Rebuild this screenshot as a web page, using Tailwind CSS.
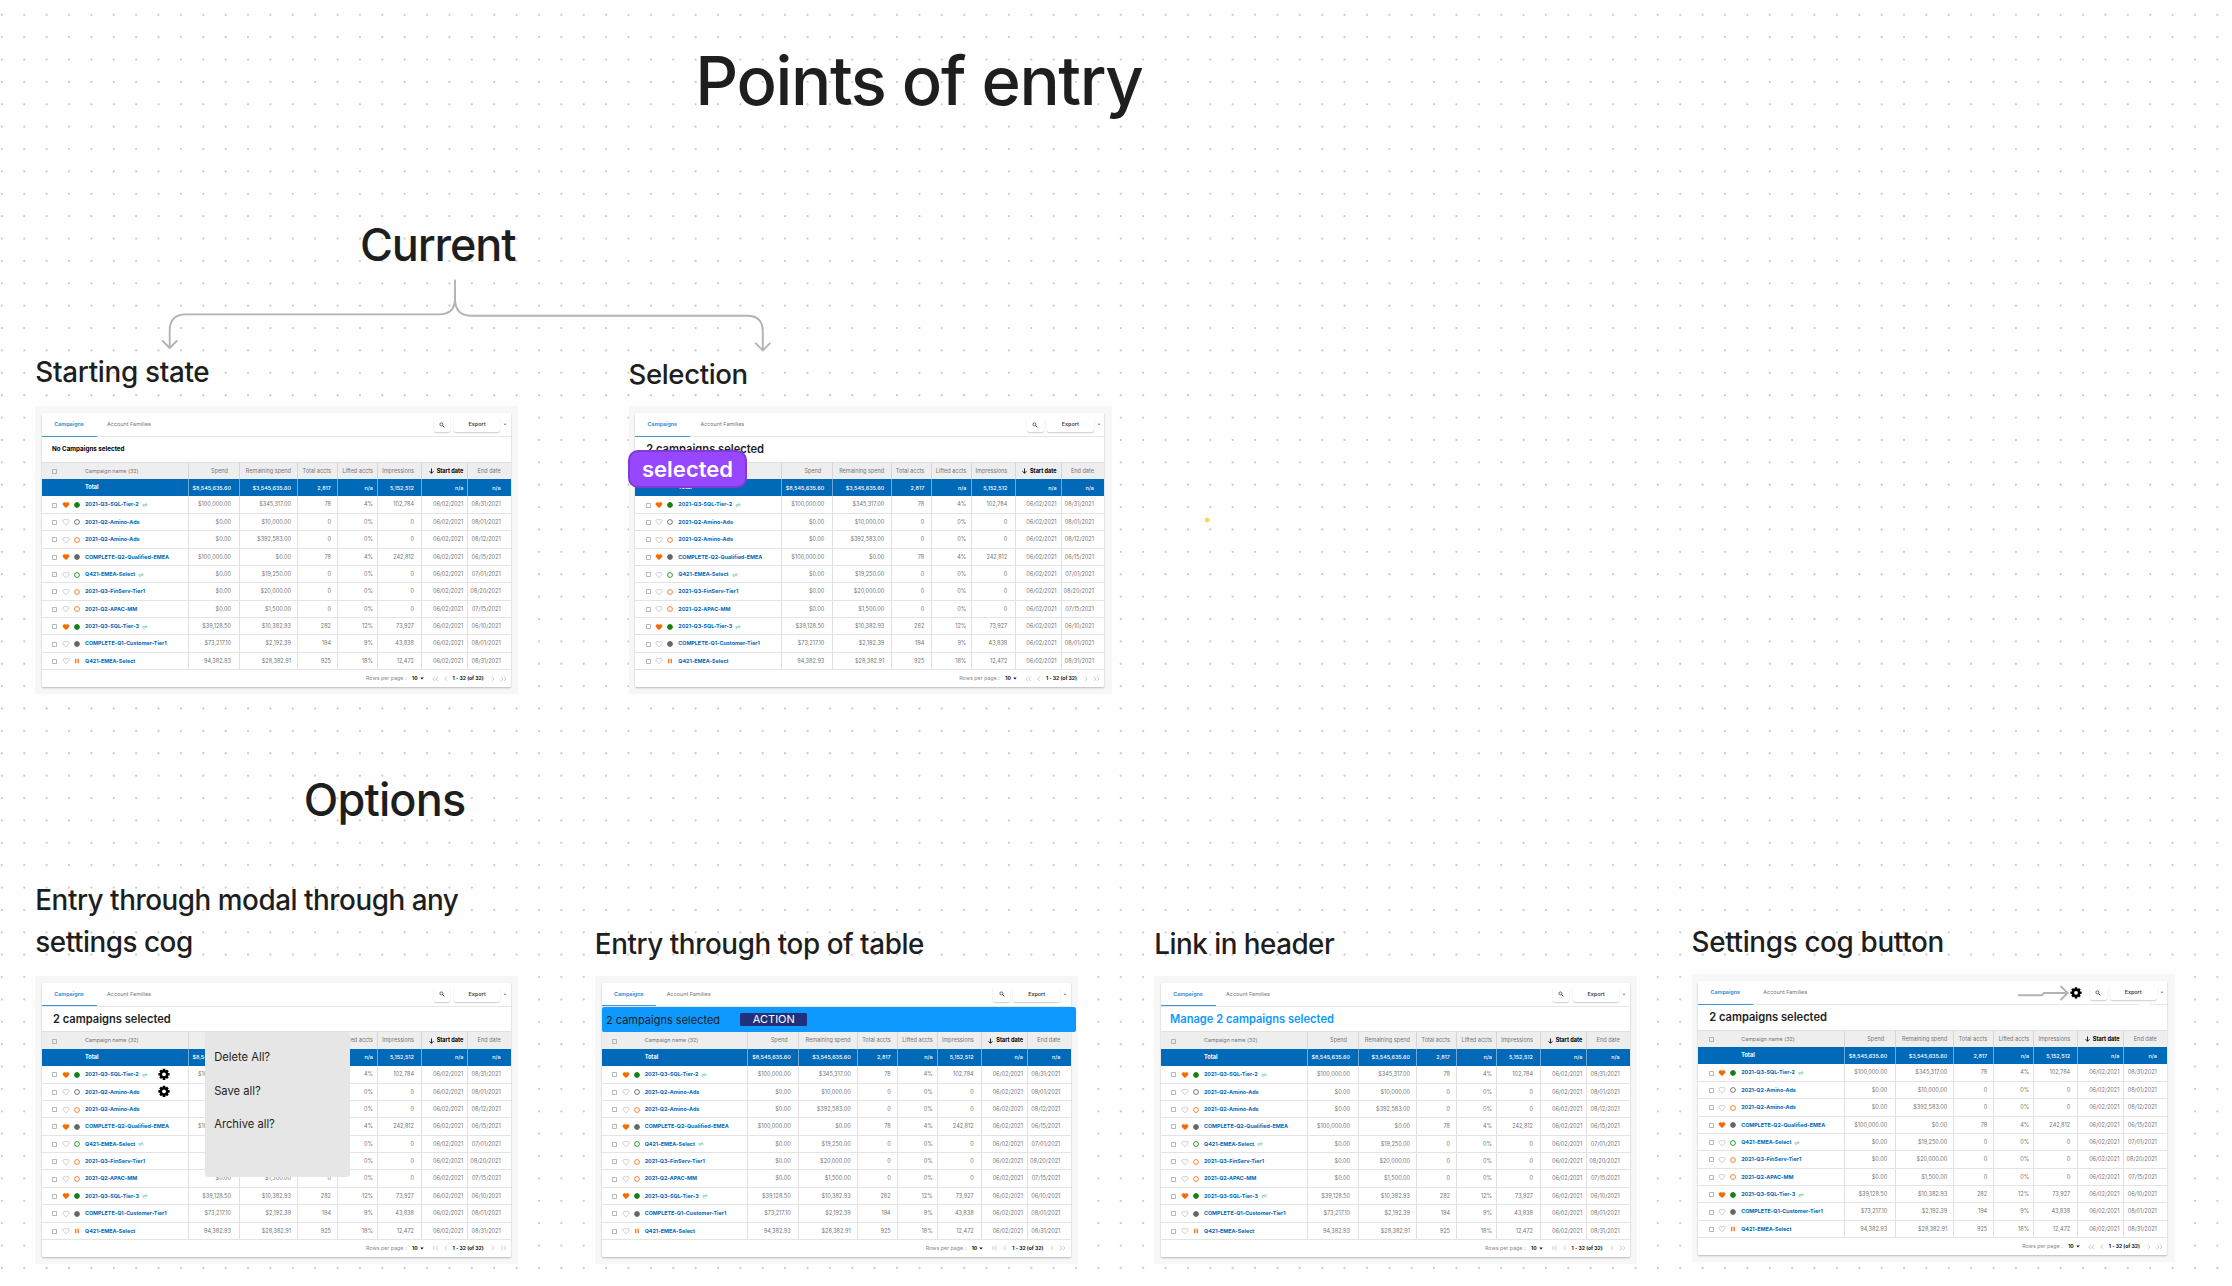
<!DOCTYPE html>
<html lang="en">
<head>
<meta charset="utf-8">
<title>Points of entry</title>
<script src="https://cdn.jsdelivr.net/npm/@tailwindcss/browser@4"></script>
</head>
<body class="bg-white">
<main class="relative w-[2232px] h-[1286px] overflow-hidden bg-[#fefefe] font-['Inter',sans-serif] font-medium text-[#1e1e1e]">
  <svg class="absolute inset-0" width="2232" height="1286" fill="none">
    <g id="dots" stroke="#cdcdcd" stroke-width="2.3" stroke-linecap="round" stroke-dasharray="0 22.378"></g>
    <g stroke="#b3b3b3" stroke-width="1.9" stroke-linecap="round" stroke-linejoin="round">
      <path d="M455 280.500V298.500Q455 314.400 439 314.400H186Q169.700 314.400 169.700 330.500V348M162.700 341L169.700 348L176.700 341"/>
      <path d="M455 298.500Q455 315.700 471 315.700H747Q762.800 315.700 762.800 331.500V350.300M755.800 343.300L762.800 350.300L769.800 343.300"/>
    </g>
    <circle cx="1207" cy="520" r="2.2" fill="#fcd04b"/>
  </svg>

  <h1 class="absolute left-[695.300px] top-[46.500px] text-[67px] tracking-[-1.400px] leading-none whitespace-nowrap">Points of entry</h1>
  <h2 class="absolute left-[360px] top-[222px] text-[45px] tracking-[-1.150px] leading-none whitespace-nowrap">Current</h2>
  <h2 class="absolute left-[303.800px] top-[777px] text-[45px] tracking-[-0.850px] leading-none whitespace-nowrap">Options</h2>
  <h3 class="absolute left-[35.300px] top-[358.500px] text-[27.800px] tracking-[-0.300px] leading-none whitespace-nowrap">Starting state</h3>
  <h3 class="absolute left-[628.500px] top-[361px] text-[27.600px] tracking-[-0.380px] leading-none whitespace-nowrap">Selection</h3>
  <h3 class="absolute left-[35.300px] top-[879.300px] w-[460px] text-[27.800px] tracking-[-0.450px] leading-[42px]">Entry through modal through any<br>settings cog</h3>
  <h3 class="absolute left-[594.800px] top-[930.500px] text-[27.800px] tracking-[-0.420px] leading-none whitespace-nowrap">Entry through top of table</h3>
  <h3 class="absolute left-[1154.300px] top-[930.500px] text-[27.800px] tracking-[-0.500px] leading-none whitespace-nowrap">Link in header</h3>
  <h3 class="absolute left-[1691.500px] top-[928.500px] text-[27.800px] tracking-[-0.320px] leading-none whitespace-nowrap">Settings cog button</h3>

  <section class="absolute left-[35.300px] top-[406.300px]" data-card="No Campaigns selected" data-kind="plain"></section>
  <section class="absolute left-[628.600px] top-[406.300px]" data-card="2 campaigns selected" data-kind="bold"></section>
  <section class="absolute left-[35.300px] top-[976px]" data-card="2 campaigns selected" data-kind="bold"></section>
  <section class="absolute left-[595px] top-[976px]" data-card="" data-kind="bold"></section>
  <section class="absolute left-[1154.300px] top-[976px]" data-card="Manage 2 campaigns selected" data-kind="link"></section>
  <section class="absolute left-[1691.500px] top-[974.300px]" data-card="2 campaigns selected" data-kind="bold"></section>

  <div class="absolute left-[628px] top-[450px] w-[119px] h-[38px] rounded-[10px] border-2 border-[#7f3bd8] bg-[#9747ff] flex items-center justify-center text-[22px] leading-none font-semibold text-white">selected</div>

  <div class="absolute left-[602px] top-[1006.700px] w-[474px] h-[25.300px] rounded-[2px] bg-[#0d99ff] flex items-center pl-[4px] text-[11px] leading-none">
    <span class="w-[134.300px] pt-[3px] font-normal">2 campaigns selected</span>
    <span class="w-[67px] h-[12.700px] rounded-[1.500px] bg-[#20307a] text-white text-[11px] font-normal flex items-center justify-center">ACTION</span>
  </div>

  <div class="absolute left-[205px] top-[1032px] w-[145px] h-[145px] rounded-[3px] bg-[#e6e6e6] pl-[9.200px] pt-[9px] text-[11.200px] font-normal leading-[33.500px]">
    <div>Delete All?</div><div>Save all?</div><div>Archive all?</div>
  </div>

  <svg class="absolute left-0 top-0 pointer-events-none" width="2232" height="1286" fill="none">
    <defs>
      <g id="cog">
        <g stroke="#000" stroke-width="2.600"><path d="M0 -5.600V5.600M-5.600 0H5.600M-3.900 -3.900L3.900 3.900M3.900 -3.900L-3.900 3.900"/></g>
        <circle r="4.300" fill="#000"/><circle r="1.900" fill="#fff"/>
      </g>
    </defs>
    <use href="#cog" x="164" y="1074.300"/>
    <use href="#cog" x="164" y="1091.400"/>
    <use href="#cog" x="2076" y="992.800"/>
    <path d="M2018 995.300H2042L2044 993H2067M2060.500 986L2067.700 993L2060.500 1000" stroke="#b3b3b3" stroke-width="1.900"/>
    <path d="M2139 1004.500H2150" stroke="#fff" stroke-width="2"/>
  </svg>
</main>

<script>
const rows = [
  ['2021-Q3-SQL-Tier-2', 1, 'green', 1, '$100,000.00', '$345,317.00', '78', '4%', '102,784', '08/31/2021'],
  ['2021-Q2-Amino-Ads', 0, 'grayRing', 0, '$0.00', '$10,000.00', '0', '0%', '0', '08/01/2021'],
  ['2021-Q2-Amino-Ads', 0, 'orangeRing', 0, '$0.00', '$392,583.00', '0', '0%', '0', '08/12/2021'],
  ['COMPLETE-Q2-Qualified-EMEA', 1, 'gray', 0, '$100,000.00', '$0.00', '78', '4%', '242,812', '06/15/2021'],
  ['Q421-EMEA-Select', 0, 'greenRing', 1, '$0.00', '$19,250.00', '0', '0%', '0', '07/01/2021'],
  ['2021-Q3-FinServ-Tier1', 0, 'orangeRing', 0, '$0.00', '$20,000.00', '0', '0%', '0', '08/20/2021'],
  ['2021-Q2-APAC-MM', 0, 'orangeRing', 0, '$0.00', '$1,500.00', '0', '0%', '0', '07/15/2021'],
  ['2021-Q3-SQL-Tier-3', 1, 'green', 1, '$39,128.50', '$10,382.93', '282', '12%', '73,927', '06/10/2021'],
  ['COMPLETE-Q1-Customer-Tier1', 0, 'gray', 0, '$73,217.10', '$2,192.39', '194', '9%', '43,838', '08/01/2021'],
  ['Q421-EMEA-Select', 0, 'pause', 0, '94,382.93', '$28,382.91', '925', '18%', '12,472', '08/31/2021'],
];
const dot = (fill, stroke) => `<circle cx="4" cy="4" r="2.4" fill="${fill}" stroke="${stroke}" stroke-width="1"/>`;
const status = {
  green: dot('#158012', '#158012'), gray: dot('#666', '#666'),
  grayRing: dot('none', '#777'), orangeRing: dot('none', '#f58233'), greenRing: dot('none', '#2c9a2c'),
  pause: '<path d="M2.700 1.800V6.200M5.300 1.800V6.200" stroke="#f58233" stroke-width="1.500"/>',
};
const heart = on => `<svg class="block w-[8px] h-[8px]" viewBox="0 0 8 8"><path d="M4 6.800L1.600 4.400C.2 2.900 1.300 1.300 2.600 1.400C3.300 1.400 3.800 1.800 4 2.200C4.200 1.800 4.700 1.400 5.400 1.400C6.700 1.300 7.800 2.900 6.400 4.400Z" fill="${on ? '#f56a00' : 'none'}" stroke="${on ? '#f56a00' : '#aaa'}" stroke-width=".6"/></svg>`;
const sync = '<svg class="block w-[6px] h-[6px] ml-[3px]" viewBox="0 0 6 6" fill="none" stroke="#6cc29a" stroke-width=".6"><path d="M.6 2.500H5.200L3.500 .8M5.400 3.700H.8L2.500 5.400"/></svg>';
const box = '<svg class="block w-[5px] h-[5px] shrink-0" viewBox="0 0 5 5"><rect x=".4" y=".4" width="4.200" height="4.200" rx=".3" fill="none" stroke="#9a9a9a" stroke-width=".8"/></svg>';
const pads = ['pr-[7.700px]', 'pr-[6.300px]', 'pr-[6.300px]', 'pr-[4.300px]', 'pr-[7.300px]', 'pr-[4px]', 'pr-[10.300px]'];
const cells = (values, border) => values.map((v, i) =>
  `<div class="flex items-center justify-end border-l pt-[1.200px] ${border} ${pads[i]}">${v}</div>`).join('');
const rowBase = 'grid grid-cols-[145.700px_51px_58.600px_40px_40px_44px_46px_43.700px] h-[17.380px]';
const heading = {
  plain: 'pl-[10px] text-[6.280px] font-bold text-black pb-[1px]',
  bold: 'pl-[11px] text-[11.130px] font-semibold text-[#1e1e1e]',
  link: 'pl-[9px] text-[11.130px] font-semibold text-[#0d99ff]',
};
document.querySelectorAll('[data-card]').forEach(el => {
  el.innerHTML = `
  <div class="w-[483px] h-[287.700px] bg-[#f7f7f7] px-[6.700px] pt-[6.700px]">
    <div class="w-[469px] h-[274px] bg-white rounded-[1.500px] shadow-[0_1px_2px_rgba(0,0,0,0.25)] flex flex-col font-normal text-[5.550px] leading-none text-[#757575] whitespace-nowrap">
      <div class="h-[24.300px] shrink-0 border-b border-[#e6e6e6] flex items-center">
        <div class="h-[24.300px] w-[54.600px] shrink-0 border-b border-[#4295d4] pl-[12.300px] pt-[1.500px] flex items-center font-semibold text-[5.400px] text-[#2b86cc]">Campaigns</div>
        <div class="pl-[10.500px] pt-[1px] flex-1 text-[5.450px]">Account Families</div>
        <div class="w-[16.700px] h-[14.700px] rounded-[2px] shadow-[0_1px_1.500px_rgba(0,0,0,0.2)] flex items-center justify-center">
          <svg class="w-[6px] h-[6px]" viewBox="0 0 6 6" fill="none" stroke="#444"><circle cx="2.400" cy="2.400" r="1.500" stroke-width=".8"/><path d="M3.500 3.500L5.400 5.400" stroke-width="1"/></svg>
        </div>
        <div class="ml-[3.400px] w-[46.600px] h-[14.700px] rounded-[2px] shadow-[0_1px_1.500px_rgba(0,0,0,0.2)] flex items-center justify-center font-semibold text-[5.400px] text-[#444]">Export</div>
        <svg class="w-[4px] h-[3px] ml-[3.200px] mr-[3.500px]" viewBox="0 0 4 3"><path d="M.5 .8H3.500L2 2.300Z" fill="#777"/></svg>
      </div>
      <div class="h-[24.400px] shrink-0 flex items-center ${heading[el.dataset.kind]}">${el.dataset.card}</div>
      <div class="${rowBase} bg-[#eee] border-t border-[#e0e0e0]">
        <div class="flex items-center pl-[10.500px] pt-[1px]">${box}<span class="ml-[27.500px] text-[5.400px]">Campaign name (32)</span></div>
        ${cells(['<span class="mr-[3px]">Spend</span>', 'Remaining spend', 'Total accts', 'Lifted accts', 'Impressions',
          '<svg class="w-[5px] h-[6px] mr-[3px]" viewBox="0 0 5 6" fill="none" stroke="#111" stroke-width=".9"><path d="M2.500 .4V5.200M.5 3.200L2.500 5.300L4.500 3.200"/></svg><b class="text-black">Start date</b>', 'End date'], 'border-[#d6d6d6]')}
      </div>
      <div class="${rowBase} bg-[#0069b8] text-white">
        <div class="flex items-center pl-[43px] pt-[1px] font-bold">Total</div>
        ${cells(['$8,545,635.60', '$3,545,635.60', '2,817', 'n/a', '5,152,512', 'n/a', 'n/a'], 'border-[#6ea8d6] text-[5.450px] font-medium')}
      </div>
      ${rows.map(([name, fav, st, linked, ...v]) => `
      <div class="${rowBase} border-b border-[#e4e4e4]">
        <div class="flex items-center pl-[10.500px] pt-[1px] text-[5.360px] font-bold text-[#0069b8]">${box}
          <span class="ml-[4.500px]">${heart(fav)}</span>
          <svg class="block w-[8px] h-[8px] ml-[3px] mr-[4px]" viewBox="0 0 8 8">${status[st]}</svg>${name}${linked ? sync : ''}</div>
        ${cells([v[0], v[1], v[2], v[3], v[4], '06/02/2021', v[5]], 'border-[#e0e0e0]')}
      </div>`).join('')}
      <div class="flex-1 flex items-center pl-[324px] text-[5.050px] text-[#888]">
        <span class="w-[46px] text-[5.300px]">Rows per page :</span>
        <b class="text-[#111]">10</b>
        <svg class="w-[4px] h-[3px] ml-[2px]" viewBox="0 0 4 3"><path d="M.3 .6H3.700L2 2.500Z" fill="#111"/></svg>
        <svg class="w-[17px] h-[6px] ml-[8px]" viewBox="0 0 17 6" fill="none" stroke="#b5b5b5" stroke-width=".7"><path d="M3 .7L.8 3L3 5.300M6 .7L3.800 3L6 5.300M15 .7L12.800 3L15 5.300"/></svg>
        <b class="ml-[4px] w-[31px] text-[#111]">1 - 32 (of 32)</b>
        <svg class="w-[16px] h-[6px] ml-[7px]" viewBox="0 0 16 6" fill="none" stroke="#b5b5b5" stroke-width=".7"><path d="M.8 .7L3 3L.8 5.300M9.800 .7L12 3L9.800 5.300M12.800 .7L15 3L12.800 5.300"/></svg>
      </div>
    </div>
  </div>`;
});
let lines = '';
for (let y = 14.8; y < 1286; y += 22.378) lines += `<path d="M1.900 ${y.toFixed(2)}H2232"/>`;
document.getElementById('dots').innerHTML = lines;
</script>
</body>
</html>
